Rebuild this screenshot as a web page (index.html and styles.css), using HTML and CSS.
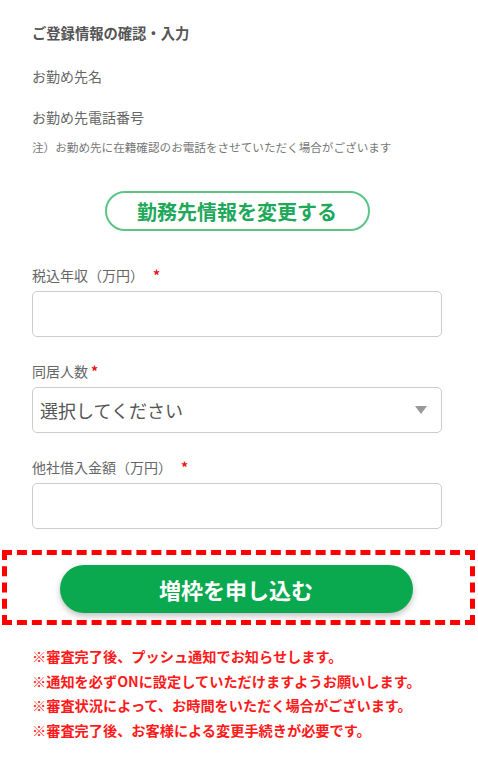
FILE: index.html
```html
<!DOCTYPE html>
<html lang="ja">
<head>
    <meta charset="utf-8">
    <title>ご登録情報の確認・入力</title>
    <link rel="stylesheet" href="styles.css">
</head>
<body>
    <div class="formSection">
        <h3 class="formTitle">ご登録情報の確認・入力</h3>
        <p class="infoRow rowName">お勤め先名</p>
        <p class="infoRow rowPhone">お勤め先電話番号</p>
        <p class="infoNote">注）お勤め先に在籍確認のお電話をさせていただく場合がございます</p>

        <div class="changeWrap">
            <button class="changeButton">勤務先情報を変更する</button>
        </div>

        <label class="fieldLabel first">税込年収（万円）<span class="required">*</span></label>
        <input class="fieldInput" type="text">

        <label class="fieldLabel">同居人数<span class="required near">*</span></label>
        <div class="fieldSelect">
            <span>選択してください</span>
            <span class="selectArrow"></span>
        </div>

        <label class="fieldLabel">他社借入金額（万円）<span class="required">*</span></label>
        <input class="fieldInput" type="text">
    </div>

    <div class="applyBox">
        <button class="applyButton">増枠を申し込む</button>
    </div>

    <div class="noteList">
        <p>※審査完了後、プッシュ通知でお知らせします。</p>
        <p>※通知を必ずONに設定していただけますようお願いします。</p>
        <p>※審査状況によって、お時間をいただく場合がございます。</p>
        <p>※審査完了後、お客様による変更手続きが必要です。</p>
    </div>
</body>
</html>
```
FILE: styles.css
```css
body {
    margin: 0;
    background-color: #ffffff;
    font-family: "Noto Sans CJK JP", "Noto Sans", sans-serif;
    color: #666666;
}
.formSection {
    padding: 0 36px 0 32px;
}
.formTitle {
    margin: 23px 0 0 0;
    font-size: 14.3px;
    line-height: 20px;
    font-weight: bold;
    color: #555555;
}
.infoRow {
    margin: 0;
    font-size: 14px;
    line-height: 20px;
    color: #666666;
}
.rowName {
    margin-top: 23px;
}
.rowPhone {
    margin-top: 21px;
}
.infoNote {
    margin: 12px 0 0 0;
    font-size: 11.6px;
    line-height: 16px;
    color: #777777;
    white-space: nowrap;
}
.changeWrap {
    display: flex;
    justify-content: center;
    margin-top: 36px;
}
.changeButton {
    width: 265px;
    height: 40px;
    border: 2px solid #5cc487;
    border-radius: 20px;
    background-color: #ffffff;
    color: #1ea85a;
    font-family: inherit;
    font-size: 20px;
    font-weight: bold;
    padding: 0;
}
.fieldLabel {
    display: block;
    margin-top: 24px;
    font-size: 14px;
    line-height: 20px;
    color: #666666;
}
.fieldLabel.first {
    margin-top: 34px;
}
.required {
    color: #ee1111;
    font-weight: bold;
    margin-left: 9px;
}
.required.near {
    margin-left: 3px;
}
.fieldInput {
    display: block;
    box-sizing: border-box;
    width: 100%;
    height: 46px;
    margin-top: 6px;
    border: 1.5px solid #cccccc;
    border-radius: 5px;
    background-color: #ffffff;
}
.fieldSelect {
    box-sizing: border-box;
    display: flex;
    align-items: center;
    justify-content: space-between;
    height: 46px;
    margin-top: 6px;
    padding: 0 14px 0 7px;
    border: 1.5px solid #cccccc;
    border-radius: 5px;
    font-size: 18px;
    color: #555555;
}
.selectArrow {
    width: 0;
    height: 0;
    border-left: 6px solid transparent;
    border-right: 6px solid transparent;
    border-top: 8px solid #999999;
}
.applyBox {
    margin: 21px 3px 0 2px;
    height: 75px;
    box-sizing: border-box;
    border: 5px dashed #ff0000;
    padding-top: 10px;
    display: flex;
    justify-content: center;
}
.applyButton {
    width: 353px;
    height: 48px;
    margin-right: 5px;
    border: none;
    border-radius: 24px;
    background-color: #0aa84f;
    color: #ffffff;
    font-family: inherit;
    font-size: 22px;
    font-weight: bold;
    box-shadow: 0 3px 6px rgba(0, 0, 0, 0.25);
}
.noteList {
    margin-top: 19px;
    padding-left: 32px;
}
.noteList p {
    margin: 0;
    font-size: 14.2px;
    line-height: 24.5px;
    font-weight: bold;
    color: #ff1a1a;
    white-space: nowrap;
}
```
